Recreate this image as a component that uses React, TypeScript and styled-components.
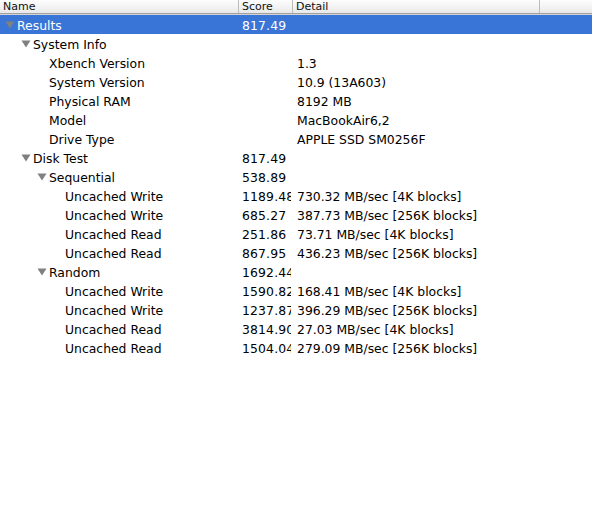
import React from "react";
import styled, { createGlobalStyle } from "styled-components";

const Global = createGlobalStyle`
  html, body { margin: 0; padding: 0; background: #fff; }
  body { font-family: "DejaVu Sans", "Liberation Sans", sans-serif; }
`;

const Page = styled.div`
  width: 592px;
  height: 511px;
  background: #fff;
  overflow: hidden;
`;

const Header = styled.div`
  display: flex;
  height: 13px;
  background: linear-gradient(#fdfdfd, #f3f3f3 50%, #e9e9e9);
  border-bottom: 1px solid #a0a0a0;
  box-shadow: 0 1px 0 #d4d4d4;
  font-size: 11px;
  line-height: 13px;
  color: #111;
`;

const HeadCell = styled.div<{ $w?: number; $sep?: boolean }>`
  ${(p) => (p.$w ? `width: ${p.$w}px; flex: none;` : "flex: 1;")}
  box-sizing: border-box;
  padding-left: 3px;
  ${(p) => (p.$sep ? "border-right: 1px solid #bcbcbc;" : "")}
  overflow: hidden;
  white-space: nowrap;
`;

const Body = styled.div`
  padding-top: 1px;
`;

const Row = styled.div<{ $sel?: boolean }>`
  display: flex;
  box-sizing: border-box;
  height: 19px;
  padding-top: 1px;
  align-items: center;
  font-size: 12.4px;
  color: ${(p) => (p.$sel ? "#fff" : "#000")};
  background: ${(p) => (p.$sel ? "#3875d7" : "transparent")};
  white-space: nowrap;
`;

const NameCell = styled.div<{ $level: number }>`
  width: 239px;
  flex: none;
  box-sizing: border-box;
  padding-left: ${(p) => 5 + p.$level * 16}px;
  display: flex;
  align-items: center;
  overflow: hidden;
`;

const Toggle = styled.span`
  width: 12px;
  flex: none;
  display: inline-flex;
  align-items: center;
  svg { display: block; }
`;

const Spacer = styled.span`
  width: 12px;
  flex: none;
`;

const ScoreCell = styled.div`
  width: 52px;
  flex: none;
  box-sizing: border-box;
  padding-left: 3px;
  letter-spacing: 0.15px;
  overflow: hidden;
`;

const DetailCell = styled.div`
  flex: 1;
  padding-left: 6px;
  overflow: hidden;
`;

type Item = { name: string; level: number; score?: string; detail?: string; group?: boolean; sel?: boolean };

const items: Item[] = [
  { name: "Results", level: 0, score: "817.49", group: true, sel: true },
  { name: "System Info", level: 1, group: true },
  { name: "Xbench Version", level: 2, detail: "1.3" },
  { name: "System Version", level: 2, detail: "10.9 (13A603)" },
  { name: "Physical RAM", level: 2, detail: "8192 MB" },
  { name: "Model", level: 2, detail: "MacBookAir6,2" },
  { name: "Drive Type", level: 2, detail: "APPLE SSD SM0256F" },
  { name: "Disk Test", level: 1, score: "817.49", group: true },
  { name: "Sequential", level: 2, score: "538.89", group: true },
  { name: "Uncached Write", level: 3, score: "1189.48", detail: "730.32 MB/sec [4K blocks]" },
  { name: "Uncached Write", level: 3, score: "685.27", detail: "387.73 MB/sec [256K blocks]" },
  { name: "Uncached Read", level: 3, score: "251.86", detail: "73.71 MB/sec [4K blocks]" },
  { name: "Uncached Read", level: 3, score: "867.95", detail: "436.23 MB/sec [256K blocks]" },
  { name: "Random", level: 2, score: "1692.44", group: true },
  { name: "Uncached Write", level: 3, score: "1590.82", detail: "168.41 MB/sec [4K blocks]" },
  { name: "Uncached Write", level: 3, score: "1237.87", detail: "396.29 MB/sec [256K blocks]" },
  { name: "Uncached Read", level: 3, score: "3814.90", detail: "27.03 MB/sec [4K blocks]" },
  { name: "Uncached Read", level: 3, score: "1504.04", detail: "279.09 MB/sec [256K blocks]" },
];

const Triangle = () => (
  <svg width="10" height="8" viewBox="0 0 10 8">
    <path d="M0.5 0.5 L9.5 0.5 L5 7.5 Z" fill="#808080" />
  </svg>
);

export default function App() {
  return (
    <Page>
      <Global />
      <Header>
        <HeadCell $w={239} $sep>Name</HeadCell>
        <HeadCell $w={54} $sep>Score</HeadCell>
        <HeadCell $w={247} $sep>Detail</HeadCell>
        <HeadCell />
      </Header>
      <Body>
        {items.map((it, i) => (
          <Row key={i} $sel={it.sel}>
            <NameCell $level={it.level}>
              {it.group ? (
                <Toggle>
                  <Triangle />
                </Toggle>
              ) : (
                <Spacer />
              )}
              {it.name}
            </NameCell>
            <ScoreCell>{it.score}</ScoreCell>
            <DetailCell>{it.detail}</DetailCell>
          </Row>
        ))}
      </Body>
    </Page>
  );
}
